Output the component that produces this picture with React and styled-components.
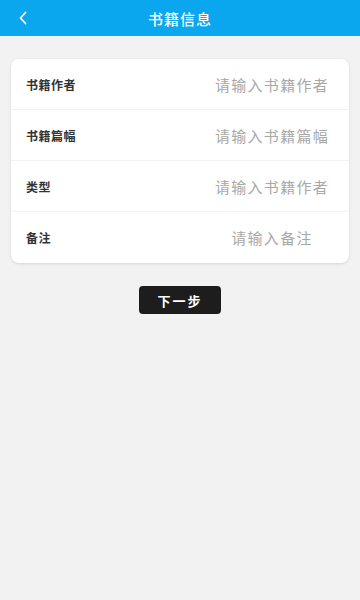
import React from 'react'
import styled, { createGlobalStyle } from 'styled-components'

const GlobalStyle = createGlobalStyle`
  html, body {
    margin: 0;
    padding: 0;
    background: #f2f2f2;
    font-family: "Noto Sans CJK SC", "Noto Sans", sans-serif;
  }
`

const fields = [
  { label: '书籍作者', placeholder: '请输入书籍作者' },
  { label: '书籍篇幅', placeholder: '请输入书籍篇幅' },
  { label: '类型', placeholder: '请输入书籍作者' },
  { label: '备注', placeholder: '请输入备注' },
]

export default function App() {
  return (
    <Page>
      <GlobalStyle />
      <Header>
        <Back>
          <svg width="12" height="14" viewBox="0 0 12 14" fill="none">
            <path d="M8.5 1.5L3.5 7l5 5.5" stroke="#fff" strokeWidth="1.8" strokeLinecap="round" strokeLinejoin="round" />
          </svg>
        </Back>
        <Title>书籍信息</Title>
      </Header>

      <Card>
        {fields.map((f, i) => (
          <Row key={i} last={i === fields.length - 1}>
            <Label>{f.label}</Label>
            <Input type="text" placeholder={f.placeholder} />
          </Row>
        ))}
      </Card>

      <Actions>
        <NextButton>下一步</NextButton>
      </Actions>
    </Page>
  )
}

const Page = styled.div`
width: 360px;
min-height: 600px;
background: #f2f2f2;
`

const Header = styled.div`
height: 36px;
background: #0aa7ef;
display: flex;
align-items: center;
justify-content: center;
position: relative;
`

const Back = styled.div`
position: absolute;
left: 17px;
top: 11px;
display: flex;
`

const Title = styled.div`
color: #fff;
font-size: 15px;
font-weight: 500;
letter-spacing: 1px;
`

const Card = styled.div`
margin: 23px 11px 0;
background: #fff;
border-radius: 8px;
box-shadow: 0 1px 3px rgba(0, 0, 0, 0.12);
`

const Row = styled.div`
height: ${p => (p.last ? '51px' : '50px')};
display: flex;
align-items: center;
justify-content: space-between;
padding-left: 15px;
border-bottom: ${p => (p.last ? 'none' : '1px solid #f3f3f3')};
`

const Label = styled.div`
font-size: 12px;
font-weight: 700;
color: #333;
letter-spacing: 0.5px;
`

const Input = styled.input`
width: 150px;
margin-right: 0;
border: none;
outline: none;
background: transparent;
text-align: center;
font-family: "Noto Sans CJK SC", sans-serif;
font-size: 15px;
letter-spacing: 1.3px;
color: #333;
&::placeholder {
  color: #a8a8a8;
}
`

const Actions = styled.div`
display: flex;
justify-content: center;
margin-top: 23px;
`

const NextButton = styled.button`
width: 82px;
height: 28px;
border: none;
border-radius: 4px;
background: #1d1d1d;
color: #fff;
font-family: "Noto Sans CJK SC", sans-serif;
font-size: 13px;
font-weight: 700;
letter-spacing: 2px;
padding: 0;
`
